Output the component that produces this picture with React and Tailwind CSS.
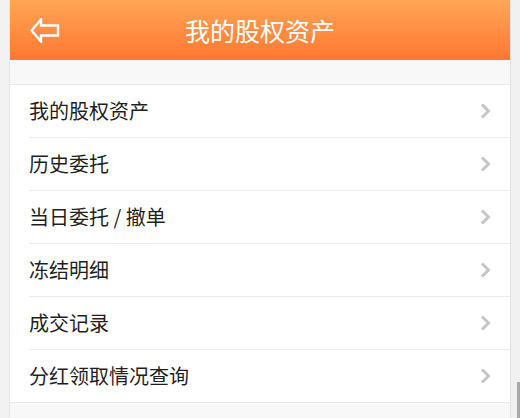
const menuItems = [
    "我的股权资产",
    "历史委托",
    "当日委托 / 撤单",
    "冻结明细",
    "成交记录",
    "分红领取情况查询"
];

const ChevronRight = () => (
    <svg width="12" height="16" viewBox="0 0 12 16" fill="none">
        <path
            d="M3 2.5 L8.5 8 L3 13.5"
            stroke="#c6c6c6"
            strokeWidth="3"
            strokeLinecap="square"
        />
    </svg>
);

const BackIcon = () => (
    <svg width="30" height="25" viewBox="0 0 30 25" fill="none">
        <path
            d="M11 1.5 L1.5 12.5 L11 23.5 L11 17.5 L28 17.5 L28 7.5 L11 7.5 Z"
            stroke="#ffffff"
            strokeWidth="2.4"
            strokeLinejoin="miter"
        />
    </svg>
);

const App = () => {
    return (
        <div
            className="flex h-[418px] w-[520px] overflow-hidden bg-[#f1f1f1]"
            style={{ fontFamily: '"Noto Sans CJK SC", "Noto Sans", sans-serif' }}
        >
            <div className="w-[10px] shrink-0 border-r border-[#e6e6e6] bg-[#f2f2f2]" />

            <div className="flex w-[500px] shrink-0 flex-col bg-[#f8f8f8]">
                <header className="flex h-[60px] shrink-0 items-center bg-gradient-to-b from-[#ffa553] to-[#ff7632] px-5">
                    <button className="flex h-[30px] w-[40px] items-center">
                        <BackIcon />
                    </button>
                    <h1 className="flex-1 pr-[40px] text-center text-[25px] leading-none text-white">
                        我的股权资产
                    </h1>
                </header>

                <div className="h-[24px] shrink-0" />

                <ul className="border-y border-[#e8e8e8] bg-white">
                    {menuItems.map((item, index) => (
                        <li key={item} className="pl-[19px]">
                            <div
                                className={
                                    index === 0
                                        ? "flex h-[52px] items-center justify-between pr-[18px]"
                                        : "flex h-[53px] items-center justify-between border-t border-[#ebebeb] pr-[18px]"
                                }
                            >
                                <span className="text-[20px] leading-none text-[#1f1f1f]">
                                    {item}
                                </span>
                                <ChevronRight />
                            </div>
                        </li>
                    ))}
                </ul>
            </div>

            <div className="flex w-[10px] shrink-0 flex-col justify-end border-l border-[#e0e0e0] bg-[#f1f1f1]">
                <div className="ml-auto h-[36px] w-[3px] bg-[#a8a8a8]" />
            </div>
        </div>
    );
};

export default App;
